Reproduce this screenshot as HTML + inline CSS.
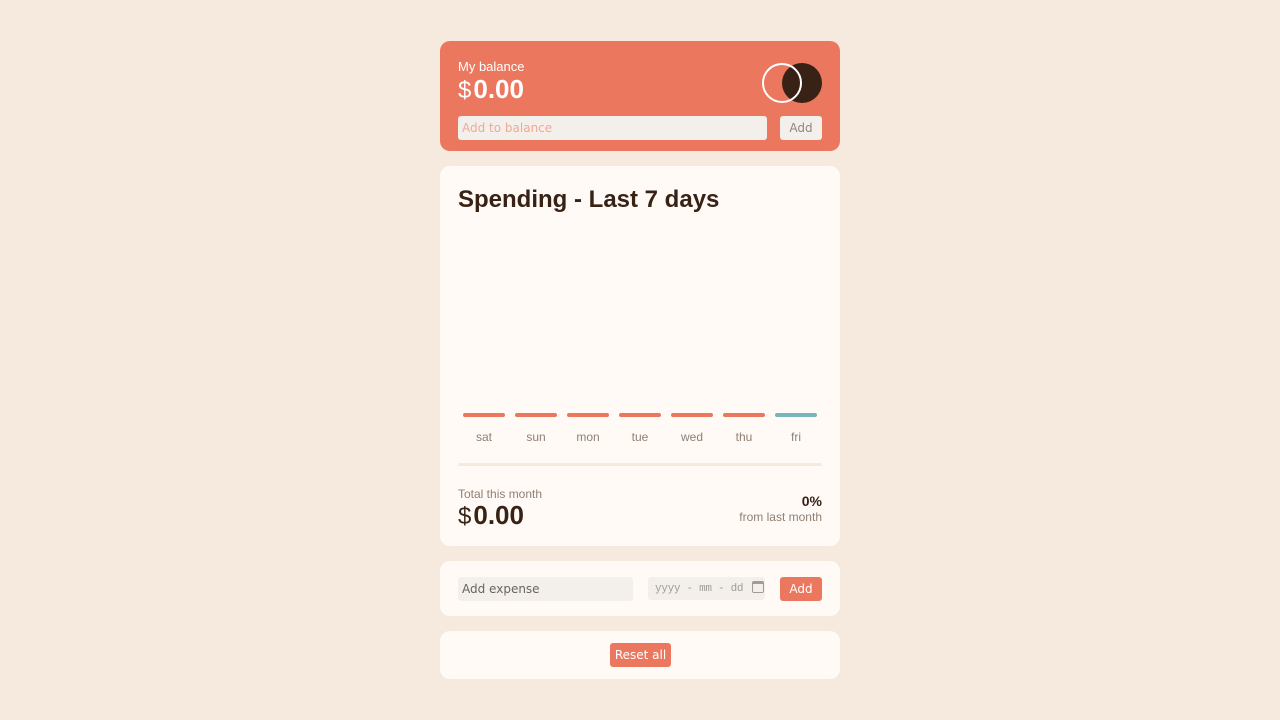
<!DOCTYPE html>
<html><head><meta charset="utf-8"><style>
*{box-sizing:border-box;margin:0;padding:0}
body{width:1280px;height:720px;background:#f6e9dd;font-family:"Liberation Sans",sans-serif;position:relative;overflow:hidden}
.card{position:absolute;left:440px;width:400px;border-radius:10px;background:#fffaf5}
.top{top:41px;height:110px;background:#ec775f;color:#fff}
.inp{position:absolute;background:#f3f0eb;border-radius:3px;font-size:12px;line-height:24px;padding-left:4px;font-family:"DejaVu Sans",sans-serif;white-space:nowrap}
.btn{position:absolute;border-radius:3px;font-size:12px;text-align:center;font-family:"DejaVu Sans",sans-serif}
.bar{position:absolute;top:413px;width:42px;height:4px;border-radius:2px;background:#ec775f}
.day{position:absolute;top:430px;width:42px;text-align:center;font-size:12px;color:#8f7f75}
</style></head><body>
<div class="card top">
 <div style="position:absolute;left:18px;top:18px;font-size:13px">My balance</div>
 <div style="position:absolute;left:18px;top:33px;font-size:26px;font-weight:bold"><span style="font-weight:normal;font-size:24px;margin-right:2px">$</span>0.00</div>
 <div style="position:absolute;left:342px;top:22px;width:40px;height:40px;border-radius:50%;background:#382216"></div>
 <div style="position:absolute;left:322px;top:22px;width:40px;height:40px;border-radius:50%;border:2px solid #fff"></div>
 <div class="inp" style="left:18px;top:75px;width:309px;height:24px;color:#f0a896">Add to balance</div>
 <div class="btn" style="left:340px;top:75px;width:42px;height:24px;line-height:24px;background:#f3f0eb;color:#8f8780">Add</div>
</div>
<div class="card" style="top:166px;height:380px">
 <div style="position:absolute;left:18px;top:20px;font-size:24px;font-weight:bold;color:#382216">Spending - Last 7 days</div>
 <div style="position:absolute;left:18px;top:297px;width:364px;height:3px;background:#f6e9dd;border-radius:2px"></div>
 <div style="position:absolute;left:18px;top:321px;font-size:12px;color:#8f7f75">Total this month</div>
 <div style="position:absolute;left:18px;top:334px;font-size:26px;font-weight:bold;color:#382216"><span style="font-weight:normal;font-size:24px;margin-right:2px">$</span>0.00</div>
 <div style="position:absolute;right:18px;top:327px;font-size:14px;font-weight:bold;color:#382216">0%</div>
 <div style="position:absolute;right:18px;top:344px;font-size:12px;color:#8f7f75">from last month</div>
</div>
<div class="bar" style="left:463px"></div><div class="bar" style="left:515px"></div><div class="bar" style="left:567px"></div><div class="bar" style="left:619px"></div><div class="bar" style="left:671px"></div><div class="bar" style="left:723px"></div><div class="bar" style="left:775px;background:#76b5bc"></div>
<div class="day" style="left:463px">sat</div><div class="day" style="left:515px">sun</div><div class="day" style="left:567px">mon</div><div class="day" style="left:619px">tue</div><div class="day" style="left:671px">wed</div><div class="day" style="left:723px">thu</div><div class="day" style="left:775px">fri</div>
<div class="card" style="top:561px;height:55px">
 <div class="inp" style="left:18px;top:16px;width:175px;height:24px;color:#6a625c">Add expense</div>
 <div class="inp" style="left:208px;top:16px;width:117px;height:23px;color:#a39a94;font-family:'Liberation Mono',monospace;font-size:11px;letter-spacing:-0.3px;padding-left:7px">yyyy - mm - dd <span style="display:inline-block;width:12px;height:12px;border:1.5px solid #a39a94;border-top-width:3px;border-radius:2px;vertical-align:-2px;margin-left:2px"></span></div>
 <div class="btn" style="left:340px;top:16px;width:42px;height:24px;line-height:24px;background:#ec775f;color:#fff">Add</div>
</div>
<div class="card" style="top:631px;height:48px">
 <div class="btn" style="left:170px;top:12px;width:61px;height:24px;line-height:24px;background:#ec775f;color:#fff">Reset all</div>
</div>
</body></html>
